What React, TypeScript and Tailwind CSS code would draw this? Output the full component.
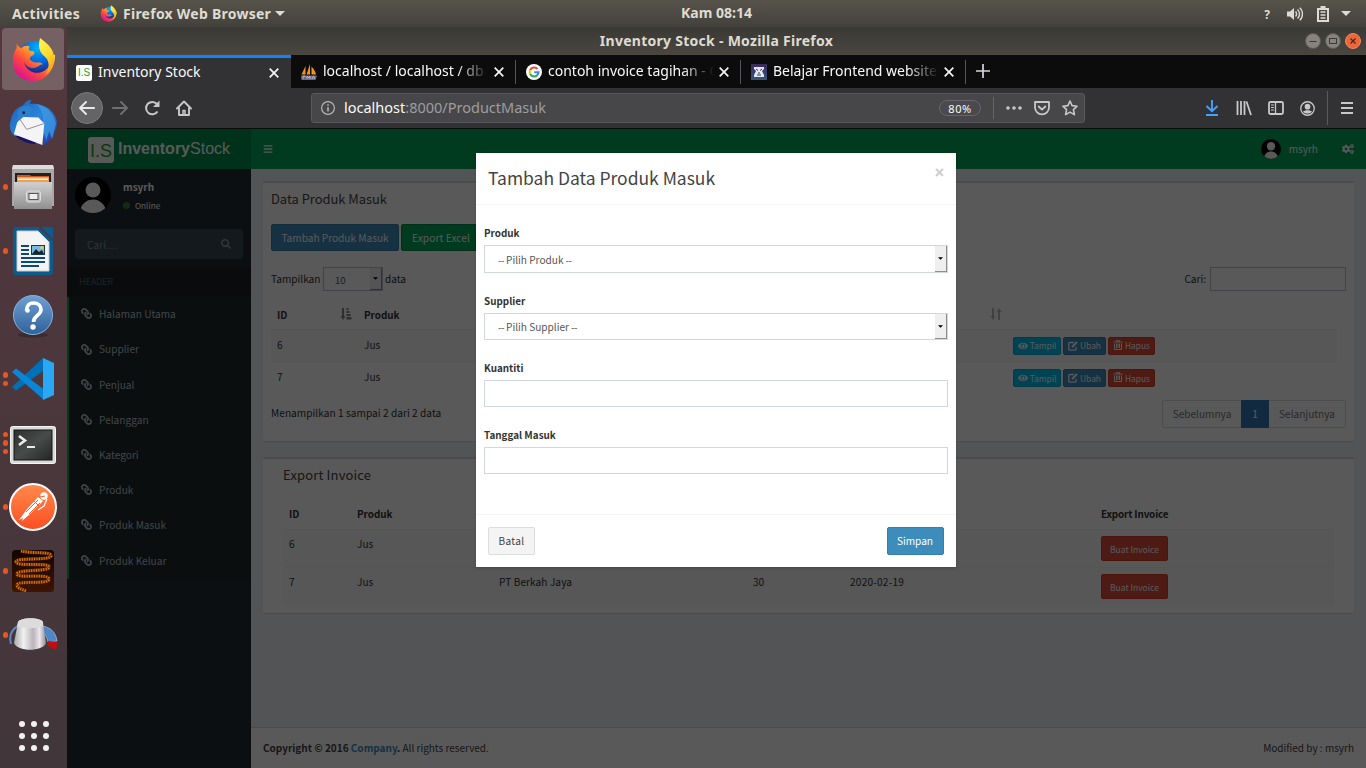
import React from "react";
import { FaBars, FaCogs, FaSearch, FaLink, FaEye } from "react-icons/fa";

const T = ({ c = "", children }: { c?: string; children: React.ReactNode }) => (
  <span className={"whitespace-nowrap " + c}>{children}</span>
);

const FirefoxLogo = ({ className, id }: { className: string; id: string }) => (
  <svg viewBox="0 0 48 48" className={className}>
    <defs>
      <linearGradient id={id + "a"} x1="0.9" y1="0.1" x2="0.2" y2="0.9">
        <stop offset="0" stopColor="#fff44f" />
        <stop offset="0.35" stopColor="#ffa32a" />
        <stop offset="0.65" stopColor="#ff4a3c" />
        <stop offset="1" stopColor="#e0138c" />
      </linearGradient>
      <radialGradient id={id + "b"} cx="0.6" cy="0.2" r="0.8">
        <stop offset="0" stopColor="#00b4f5" />
        <stop offset="0.6" stopColor="#0060df" />
        <stop offset="1" stopColor="#2a1e75" />
      </radialGradient>
      <linearGradient id={id + "c"} x1="0" y1="0" x2="0.4" y2="1">
        <stop offset="0" stopColor="#fff85a" />
        <stop offset="0.6" stopColor="#ffd92e" />
        <stop offset="1" stopColor="#ffa31a" />
      </linearGradient>
    </defs>
    <circle cx="25" cy="22" r="17.5" fill={`url(#${id}b)`} />
    <path d="M6 7c1 3 3 4 5 5 3-3 6-3 9-2-2 2-1 4 1 5 2 0 4 0 4 2 0 3-5 3-5 6 0 2 2 3 5 4 3 1 6-1 9 2-4 0-6 4-10 4-5 0-9-3-10-7 1 8 8 13 16 12 9-1 14-9 13-18l4-1c0 15-9 28-23 28C11 47 2 38 2 26 2 19 4 15 6 12z" fill={`url(#${id}a)`} />
    <path d="M31 1c6 5 14 10 15 20 1 9-4 16-9 19 4-6 4-12 1-17-3-4-11-7-7-22z" fill={`url(#${id}c)`} />
  </svg>
);

const Thunderbird = () => (
  <svg viewBox="0 0 50 50" className="size-[49px]">
    <defs>
      <linearGradient id="tb" x1="0" y1="0" x2="1" y2="1">
        <stop offset="0" stopColor="#1b5fb8" />
        <stop offset="0.5" stopColor="#2b86dc" />
        <stop offset="1" stopColor="#22289a" />
      </linearGradient>
    </defs>
    <path d="M2 21C4 12 9 8 14 7c3-5 6-6 9-6l-2 4c14-2 26 7 28 18 0 12-7 20-15 25l1-4-6 2C11 45-1 36 1 25z" fill="url(#tb)" />
    <path d="M28 5c9 2 18 9 20 20l-4 16-3-8-3 9-2-7-4 9 3-14-2-2c4-9 1-16-5-23z" fill="#3d9be4" opacity=".75" />
    <path d="M6 38c5 4 11 7 20 8l9-4-2-6z" fill="#1d1262" />
    <path d="M10 18L30 19l6 6-2 22L5 36z" fill="#f4f4f5" />
    <path d="M10 19l8 12 18-6" fill="none" stroke="#8c8f94" strokeWidth="1" />
    <path d="M9 12c5-7 12-6 15-2 0 5-7 6-10 9L8 24z" fill="#2f7fd0" />
    <circle cx="15" cy="14" r="1.500" fill="#1a2c4a" />
  </svg>
);

const Files = () => (
  <svg viewBox="0 0 44 46" className="h-[46px] w-[44px]">
    <defs>
      <linearGradient id="fi" x1="0" y1="0" x2="0" y2="1">
        <stop offset="0" stopColor="#d0d0d0" />
        <stop offset="1" stopColor="#909090" />
      </linearGradient>
    </defs>
    <path d="M2 1h40l1 4v37H1V5z" fill="#a8a8a8" />
    <path d="M2 1h40l1 4H1z" fill="#dcdcdc" />
    <rect x="4" y="9" width="36" height="14" fill="#23201f" />
    <path d="M6 11h13l1 1h18v8H6z" fill="#c9581f" />
    <path d="M6 13h32v6H6z" fill="#f0a04c" />
    <path d="M7 14.500h30v1.500H7z" fill="#fff1da" />
    <path d="M3 18h38v27H3z" fill="url(#fi)" />
    <rect x="15.500" y="27" width="14" height="11" rx="2" fill="#bcbcbc" stroke="#dedede" />
    <rect x="18" y="29.500" width="9" height="6" fill="#eee" stroke="#555" />
  </svg>
);

const Writer = () => (
  <svg viewBox="0 0 40 48" className="h-[48px] w-[40px]">
    <path d="M3 0h22l15 14v31a3 3 0 0 1-3 3H3a3 3 0 0 1-3-3V3a3 3 0 0 1 3-3z" fill="#0d5a8c" />
    <path d="M28 0h10a2 2 0 0 1 2 2v10z" fill="#0a5c93" />
    <path d="M4 4h21l11 11v29H4z" fill="#f3f3f3" stroke="#c9c9c9" />
    <path d="M8 19h8M8 23h8M8 27h8M8 31h24M8 35h24M8 39h18" stroke="#0e4a74" strokeWidth="2" />
    <rect x="18.500" y="18.500" width="13" height="9" fill="#7cb7e0" stroke="#0e3a5c" />
    <path d="M19 27l4-5 3 3 3-2 2 4z" fill="#222" />
    <circle cx="29" cy="20.500" r="1.500" fill="#f3cf3e" />
  </svg>
);

const Help = () => (
  <svg viewBox="0 0 42 44" className="mt-0.5 h-[44px] w-[42px]">
    <defs>
      <linearGradient id="he" x1="0" y1="0" x2="0" y2="1">
        <stop offset="0" stopColor="#6f9fd4" />
        <stop offset="1" stopColor="#2f6299" />
      </linearGradient>
    </defs>
    <ellipse cx="21" cy="41" rx="15" ry="2.500" fill="#2f2326" opacity=".6" />
    <circle cx="21" cy="21" r="19.500" fill="url(#he)" stroke="#86b3e0" />
    <path d="M14.500 16.500c0-5 3-7.500 7-7.500 4.500 0 7.500 2.500 7.500 6.500 0 6-7.500 6-7.500 12.500" fill="none" stroke="#fff" strokeWidth="3.600" />
    <circle cx="15.500" cy="16.500" r="2.300" fill="#fff" />
    <circle cx="21" cy="33" r="2.700" fill="#fff" />
  </svg>
);

const Vscode = () => (
  <svg viewBox="0 0 42 42" className="size-[42px]">
    <path d="M0 29l4 3.500L31 13V0z" fill="#0070b8" />
    <path d="M0 14l4-3.500 28 21V42L0 14z" fill="#0a86d8" />
    <path d="M31 0l11 5v32l-11 5z" fill="#2aa7f5" />
  </svg>
);

const TerminalIcon = () => (
  <svg viewBox="0 0 46 38" className="mt-[3px] h-[38px] w-[46px]">
    <defs>
      <linearGradient id="te" x1="0" y1="0" x2="1" y2="1">
        <stop offset="0" stopColor="#2c2f2e" />
        <stop offset="0.5" stopColor="#474b49" />
        <stop offset="1" stopColor="#232625" />
      </linearGradient>
    </defs>
    <rect x="0.500" y="0.500" width="45" height="37" rx="2" fill="#d9dbd9" stroke="#f4f4f4" />
    <rect x="4" y="4" width="38" height="30" fill="url(#te)" stroke="#151716" />
    <path d="M9 10l6 4.500L9 19" fill="none" stroke="#e8ebe8" strokeWidth="2.600" />
    <path d="M17 21h8" stroke="#e8ebe8" strokeWidth="2" />
  </svg>
);

const Postman = () => (
  <svg viewBox="0 0 48 48" className="size-[48px]">
    <defs>
      <linearGradient id="po" x1="0" y1="0" x2="0" y2="1">
        <stop offset="0" stopColor="#ff8a4c" />
        <stop offset="1" stopColor="#fb4e22" />
      </linearGradient>
    </defs>
    <circle cx="24" cy="24" r="23" fill="url(#po)" stroke="#fff" strokeWidth="2" />
    <circle cx="35" cy="13" r="3.700" fill="#fff" />
    <path d="M29 14l5 4-5 5-8 8-8 7 1-3-4 2 8-11z" fill="#fff" />
    <path d="M29 17L17 29M31 20L20 31M25 18l5 5" stroke="#f6602c" strokeWidth="1" fill="none" />
    <path d="M38 16l-3 7-6 4" stroke="#fff" strokeWidth="1.200" fill="none" />
    <path d="M31 14l5-1" stroke="#f6602c" strokeWidth="1" />
  </svg>
);

const coil = "M9 1c12 3 31 0 30 5S3 7 4 12s33 0 33 5S5 19 5 24s32-1 32 5S5 30 5 35c0 3 4 4 9 6";
const Spring = () => (
  <svg viewBox="0 0 42 42" className="size-[42px]">
    <defs>
      <linearGradient id="sp" x1="0" y1="0" x2="0" y2="1">
        <stop offset="0" stopColor="#120500" />
        <stop offset="1" stopColor="#401400" />
      </linearGradient>
    </defs>
    <rect width="42" height="42" rx="3.500" fill="url(#sp)" />
    <path d={coil} fill="none" stroke="#6a2a02" strokeWidth="3.400" />
    <path d={coil} fill="none" stroke="#d8780f" strokeWidth="2.800" strokeDasharray="1.100 1.300" />
  </svg>
);

const Knob = () => (
  <svg viewBox="0 0 50 34" className="-mt-[3px] h-[34px] w-[50px]">
    <defs>
      <linearGradient id="kn" x1="0" y1="0" x2="1" y2="0">
        <stop offset="0" stopColor="#a9a9a9" />
        <stop offset="0.3" stopColor="#f1f1f1" />
        <stop offset="0.6" stopColor="#b9b5ba" />
        <stop offset="0.8" stopColor="#eee6ee" />
        <stop offset="1" stopColor="#8a8a8a" />
      </linearGradient>
    </defs>
    <path d="M3 27C0 16 6 9 16 7" fill="none" stroke="#5c8ac4" strokeWidth="2" />
    <path d="M34 9c8 1 14 6 15 15l-9 1c-1-4-2-7-6-10z" fill="#4f86c6" stroke="#a8c4e4" strokeWidth=".7" />
    <path d="M40 24l10 1-2 8-8-4z" fill="#c40d0d" />
    <path d="M10 5c3-5 22-5 25 0l3 21c-3 9-29 9-32 0z" fill="url(#kn)" />
    <path d="M10 5c3-5 22-5 25 0v4c-8 3-18 3-26 0z" fill="#dcdcdc" />
  </svg>
);

const dock = [
  { n: 2, el: <FirefoxLogo className="size-[45px]" id="ffL" />, on: true },
  { n: 0, el: <Thunderbird /> },
  { n: 1, el: <Files /> },
  { n: 1, el: <Writer /> },
  { n: 0, el: <Help /> },
  { n: 2, el: <Vscode /> },
  { n: 3, el: <TerminalIcon /> },
  { n: 1, el: <Postman /> },
  { n: 1, el: <Spring /> },
  { n: 1, el: <Knob /> },
];

const Dock = () => (
  <aside className="flex w-[67px] shrink-0 flex-col bg-linear-to-b from-[#53383d] via-[#4b373c] to-[#41363a]">
    {dock.map((d, i) => (
      <div key={i} className="flex h-16 items-center">
        <div className="flex w-2 shrink-0 flex-col items-end gap-[3px]">
          {Array.from({ length: d.n }, (_, k) => (
            <span key={k} className="size-[5.500px] rounded-full bg-[#e95420]" />
          ))}
        </div>
        <div className={d.on ? "-ml-1.5 flex h-[62px] w-[62px] items-center justify-center rounded-[4px] bg-[#756064]" : "-ml-1.5 flex h-[62px] w-[62px] items-center justify-center"}>{d.el}</div>
      </div>
    ))}
    <div className="mt-auto mb-[17px] grid grid-cols-3 gap-[6px] self-center">
      {Array.from({ length: 9 }, (_, k) => (
        <span key={k} className="size-[6px] rounded-full bg-[#f2f0f0]" />
      ))}
    </div>
  </aside>
);

const Caret = ({ className }: { className: string }) => (
  <svg viewBox="0 0 10 5" className={className}><path d="M0 0h10L5 5z" fill="currentColor" /></svg>
);

const TopBar = () => (
  <header className="flex h-[27px] shrink-0 items-center bg-linear-to-b from-[#57544b] to-[#42413b] font-['Noto_Sans',sans-serif] text-[14px] font-bold text-[#dfdbd2]">
    <div className="flex w-[681px] items-center pl-3">
      <T c="tracking-[0.3px]">Activities</T>
      <FirefoxLogo className="ml-5 size-[17px]" id="ffS" />
      <span className="ml-1.5 flex"><T c="tracking-[0.25px]">Firefox Web Browser</T></span>
      <Caret className="ml-1 h-[5px] w-[10px]" />
    </div>
    <span className="flex pb-[2px]"><T>Kam 08:14</T></span>
    <div className="flex flex-1 items-center justify-end pr-[15px]">
      <span className="flex pt-0.5 text-[12px]"><T>?</T></span>
      <svg viewBox="0 0 16 14" className="ml-[17px] h-[14px] w-4" fill="none" stroke="currentColor" strokeWidth="1.400">
        <path d="M0 4.500h3L7 1v12L3 9.500H0z" fill="currentColor" stroke="none" />
        <path d="M8.500 4.500a3.500 3.500 0 0 1 0 5M10.500 2.500a6 6 0 0 1 0 9M12.800.8a8.500 8.500 0 0 1 0 12.400" />
      </svg>
      <svg viewBox="0 0 12 16" className="ml-[14px] h-4 w-3" fill="none" stroke="currentColor">
        <path d="M1 3h10v12H1z" strokeWidth="2" />
        <path d="M3.500 1h5" strokeWidth="2" />
        <path d="M3.500 6h5M3.500 9h5M3.500 12h5" strokeWidth="1.400" />
      </svg>
      <Caret className="ml-3 h-[5px] w-[10px]" />
    </div>
  </header>
);

const TitleBar = () => (
  <div className="flex h-7 shrink-0 items-center bg-linear-to-b from-[#3a3935] to-[#49473f] px-[5px] font-['Noto_Sans',sans-serif] text-[14px] font-bold text-[#dfdbd2]">
    <div className="flex-1" />
    <span className="flex pb-[2px]"><T c="tracking-[0.27px]">Inventory Stock - Mozilla Firefox</T></span>
    <div className="flex flex-1 justify-end gap-1">
      <svg viewBox="0 0 16 16" className="size-4"><circle cx="8" cy="8" r="7.500" fill="#85837b" stroke="#5c5a53" /><path d="M4.500 8.500h7" stroke="#3a3935" /></svg>
      <svg viewBox="0 0 16 16" className="size-4"><circle cx="8" cy="8" r="7.500" fill="#85837b" stroke="#5c5a53" /><rect x="4.500" y="5.500" width="7" height="5" fill="none" stroke="#3a3935" /></svg>
      <svg viewBox="0 0 16 16" className="size-4"><circle cx="8" cy="8" r="7.500" fill="#ee6538" stroke="#f08763" /><path d="M5.500 5.500l5 5M10.500 5.500l-5 5" stroke="#4a2a1c" strokeWidth="1.300" /></svg>
    </div>
  </div>
);

const Close = () => (
  <svg viewBox="0 0 10 10" className="size-[10px] shrink-0"><path d="M0.700 0.700l8.600 8.600M9.300 0.700l-8.600 8.600" stroke="#f5f5f7" strokeWidth="1.700" /></svg>
);

const PmaIcon = () => (
  <svg viewBox="0 0 16 16" className="size-4 shrink-0">
    <path d="M4.500 2v8.500H0.500zM9 0v10.500H5.500zM10.500 2.500c2 2 4 5 4.500 8h-4.500z" fill="#f3941d" />
    <path d="M0 11.500h16l-1.500 4.500H0.500z" fill="#6b6884" />
    <path d="M2 15v-3h2v1M6 15v-3l2 2 1-2v3M11 15l1.500-3 1.500 3" stroke="#c9c6dc" fill="none" strokeWidth=".8" />
  </svg>
);
const GoogleIcon = () => (
  <svg viewBox="0 0 16 16" className="size-4 shrink-0">
    <circle cx="8" cy="8" r="8" fill="#fff" />
    <g fill="none" strokeWidth="2.100">
      <path d="M11.500 4.900A4.500 4.500 0 0 0 4.200 5.900" stroke="#ea4335" />
      <path d="M4.200 5.900a4.500 4.500 0 0 0 0 4.200" stroke="#fbbc05" />
      <path d="M4.200 10.100a4.500 4.500 0 0 0 6.900 1.300" stroke="#34a853" />
      <path d="M11.100 11.400A4.500 4.500 0 0 0 12.500 8.200H8.200" stroke="#4285f4" />
    </g>
  </svg>
);
const HelmetIcon = () => (
  <svg viewBox="0 0 16 16" className="size-4 shrink-0">
    <defs><linearGradient id="hm" x1="0" y1="0" x2="0" y2="1"><stop offset="0" stopColor="#3a2a5c" /><stop offset="1" stopColor="#34557e" /></linearGradient></defs>
    <rect width="16" height="16" fill="url(#hm)" />
    <path d="M3 3h10v2l-2 2 2 4v2H3v-2l2-4-2-2z" fill="#e6e6ee" />
    <path d="M5 5l2 1.500M11 5L9 6.500M7 9h2M6 11h4" stroke="#38355f" strokeWidth="1" />
  </svg>
);

const fade = "[mask-image:linear-gradient(to_right,black_calc(100%-32px),transparent)]";

const Tabs = () => (
  <div className="flex h-[33px] shrink-0 bg-[#0c0c0d] font-['Noto_Sans',sans-serif] text-[14px] leading-[31px] text-[#f9f9fa]">
    <div className="flex w-[224px] items-center border-t-[3px] border-[#0a84ff] bg-[#323234] pr-3 pl-[9px] leading-[28px]">
      <span className="flex size-4 items-center justify-center rounded-[2px] bg-white font-['Liberation_Sans',sans-serif] text-[10px] leading-4 text-[#22a022]">I.S</span>
      <span className="ml-1.5 flex-1 pb-0.5"><T>Inventory Stock</T></span>
      <Close />
    </div>
    {[
      { icon: <PmaIcon />, t: "localhost / localhost / db", c: "pl-[10px]" },
      { icon: <GoogleIcon />, t: "contoh invoice tagihan - G", c: "pl-[10px]" },
      { icon: <HelmetIcon />, t: "Belajar Frontend website", c: "pl-[10px]" },
    ].map((x) => (
      <div key={x.t} className={"flex w-[225px] items-center pr-[11px] " + x.c}>
        {x.icon}
        <span className={"ml-1.5 h-[33px] min-w-0 flex-1 overflow-hidden " + fade}><T>{x.t}</T></span>
        <span className="ml-[5px] flex"><Close /></span>
        <span className="-mr-[11px] ml-[11px] h-6 w-px bg-[#55555a]" />
      </div>
    ))}
    <svg viewBox="0 0 14 14" className="mt-[9px] ml-[10px] size-[14px]"><path d="M7 0v14M0 7h14" stroke="#d7d7db" strokeWidth="1.700" /></svg>
  </div>
);

const NavBar = () => (
  <div className="flex h-[41px] shrink-0 items-center border-b border-[#0c0c0d] bg-[#323234] pr-[13px] pl-1 text-[#c8c8ca]">
    <span className="flex size-8 items-center justify-center rounded-full border border-[#7b7b7d] bg-[#646466]">
      <svg viewBox="0 0 16 16" className="size-4" fill="none" stroke="#e8e8ea" strokeWidth="1.900" strokeLinecap="round" strokeLinejoin="round"><path d="M15.200 8H1M7 2L1 8l6 6" /></svg>
    </span>
    <svg viewBox="0 0 16 16" className="ml-[9px] size-4" fill="none" stroke="#707073" strokeWidth="1.900" strokeLinecap="round" strokeLinejoin="round"><path d="M0.800 8H15M9 2l6 6-6 6" /></svg>
    <svg viewBox="0 0 16 16" className="ml-4 size-4" fill="none" stroke="currentColor" strokeWidth="2"><path d="M13.500 11.500A6.200 6.200 0 1 1 13 4" /><path d="M15.500 0.500V7H9z" fill="currentColor" stroke="none" /></svg>
    <svg viewBox="0 0 16 16" className="ml-4 size-4" fill="none" stroke="currentColor" strokeWidth="1.900" strokeLinejoin="round" strokeLinecap="round"><path d="M1 8.500L8 1.500l7 7M3 8v7h10V8" /><path d="M7 14.500v-4h2v4" strokeWidth="1.500" /></svg>
    <div className="ml-[119px] flex h-[30px] w-[774px] items-center rounded-[3px] border border-[#5a5a5e] bg-[#474749] pr-[6px] pl-[9px] font-['Noto_Sans',sans-serif] text-[14.500px]">
      <svg viewBox="0 0 14 14" className="size-[14px]" fill="none" stroke="#b4b4b6"><circle cx="7" cy="7" r="6.400" strokeWidth="1.200" /><path d="M7 6.200v4.300M7 3.200v1.600" strokeWidth="1.600" /></svg>
      <span className="ml-[9px] flex-1 text-[#9d9da0]"><T><span className="text-[#f9f9fa]">localhost</span>:8000/ProductMasuk</T></span>
      <span className="flex h-4 w-[42px] items-center justify-center rounded-full border border-[#66666a] bg-[#4a4a4e] text-[11px] leading-none text-[#f9f9fa]"><T c="tracking-[0.600px]">80%</T></span>
      <span className="ml-3 h-[22px] w-px bg-[#66666a]" />
      <svg viewBox="0 0 16 4" className="ml-3 h-1 w-4" fill="currentColor"><circle cx="2" cy="2" r="1.800" /><circle cx="8" cy="2" r="1.800" /><circle cx="14" cy="2" r="1.800" /></svg>
      <svg viewBox="0 0 16 16" className="ml-3 size-4" fill="none" stroke="currentColor" strokeWidth="1.800" strokeLinejoin="round" strokeLinecap="round"><path d="M1 2h14v5.500a7 6.800 0 0 1-14 0z" /><path d="M4.700 6.500L8 9.700l3.300-3.200" /></svg>
      <svg viewBox="0 0 16 16" className="ml-3 size-4" fill="none" stroke="currentColor" strokeWidth="1.600" strokeLinejoin="round"><path d="M8 1l2.100 4.600 5 .6-3.700 3.400 1 5L8 12.100l-4.400 2.500 1-5L.9 6.200l5-.6z" /></svg>
    </div>
    <div className="ml-auto flex items-center">
      <svg viewBox="0 0 14 16" className="h-4 w-[14px]" fill="none" stroke="#45a1ff" strokeWidth="1.900"><path d="M7 0v11M1.500 6L7 11.300 12.500 6M1 15h12" /></svg>
      <svg viewBox="0 0 16 16" className="ml-[17px] size-4" fill="none" stroke="currentColor" strokeWidth="1.800"><path d="M1.500 1v14M5 1v14M8.500 1v14M10.500 1.500L15 15" /></svg>
      <svg viewBox="0 0 16 16" className="ml-4 size-4" fill="none" stroke="currentColor" strokeWidth="1.800"><rect x="1" y="2" width="14" height="12" rx="1.500" /><path d="M7.500 2v12" strokeWidth="1.300" /><path d="M3 5h3M3 7.500h3M3 10h3" strokeWidth="1" /></svg>
      <svg viewBox="0 0 16 16" className="ml-4 size-[15px]" fill="none" stroke="currentColor"><circle cx="8" cy="8" r="7.200" strokeWidth="1.400" /><circle cx="8" cy="6" r="3" fill="currentColor" stroke="none" /><path d="M3.300 11.500C4.500 9.300 11.500 9.300 12.700 11.500 11 14 5 14 3.300 11.500z" fill="currentColor" stroke="none" /></svg>
      <span className="ml-3 h-[34px] w-px bg-[#5a5a5e]" />
      <svg viewBox="0 0 12 12" className="ml-[13px] size-3" stroke="currentColor" strokeWidth="1.900"><path d="M0 1h12M0 6h12M0 11h12" /></svg>
    </div>
  </div>
);

const Avatar = ({ className }: { className: string }) => (
  <svg viewBox="0 0 36 36" className={className}>
    <defs><clipPath id="av"><circle cx="18" cy="18" r="18" /></clipPath></defs>
    <g clipPath="url(#av)">
      <rect width="36" height="36" fill="#000" />
      <circle cx="18" cy="13" r="7.500" fill="#fff" />
      <path d="M4.500 36c1-9 7-13.500 13.500-13.500S30.500 27 31.500 36z" fill="#fff" />
    </g>
  </svg>
);

const menu = ["Halaman Utama", "Supplier", "Penjual", "Pelanggan", "Kategori", "Produk", "Produk Masuk", "Produk Keluar"];

const Sidebar = () => (
  <aside className="flex w-[184px] shrink-0 flex-col bg-[#222d32]">
    <div className="flex h-[40px] items-center bg-[#008d4c] pl-[21px]">
      <span className="mt-0.5 flex size-[26px] items-center justify-center rounded-[3px] bg-white pt-0.5 font-['Liberation_Sans',sans-serif] text-[18px] leading-none text-[#18a818]">I.S</span>
      <span className="ml-1 font-['Liberation_Sans',sans-serif] text-[16px] leading-6 text-white"><T><b>Inventory</b>Stock</T></span>
    </div>
    <div className="flex items-start gap-3 px-2 pt-2">
      <Avatar className="size-9" />
      <div className="flex flex-col pt-0.5 text-white">
        <span className="text-[10px] leading-4 font-bold"><T>msyrh</T></span>
        <span className="mt-[2px] flex items-center gap-[5px] text-[8.200px] leading-4"><span className="size-[7px] rounded-full bg-[#3c763d]" /><T>Online</T></span>
      </div>
    </div>
    <div className="mx-2 mt-4 flex h-[30px] items-center justify-between rounded-[3px] bg-[#374850] px-3 text-[10px] text-[#8a9499]">
      <T c="tracking-[0.15px]">Cari....</T>
      <FaSearch className="size-[10px] text-[#999]" />
    </div>
    <div className="mt-2 flex h-[30px] items-center bg-[#1a2226] px-3 pb-px text-[9.300px] text-[#4b646f]"><T c="tracking-[-0.3px]">HEADER</T></div>
    <nav className="flex flex-col border-l-2 border-[#00a65a] bg-[#1e282c]">
      {menu.map((m) => (
        <div key={m} className="flex h-[35.200px] items-center gap-[7px] pb-[1.500px] pl-3 text-[10.150px] text-[#b8c7ce]">
          <FaLink className="size-[11px] -scale-x-100" />
          <T>{m}</T>
        </div>
      ))}
    </nav>
  </aside>
);

const SortAsc = () => (
  <svg viewBox="0 0 12 12" className="h-3 w-3 text-[#888]" fill="currentColor"><path d="M2 0h2v8h1.500L3 12 .5 8H2zM6.500 0H8.500v2H6.500zM6.500 3H9.500v2H6.500zM6.500 6H10.500v2H6.500zM6.500 9H11.500v2.500H6.500z" /></svg>
);
const SortBoth = () => (
  <svg viewBox="0 0 12 12" className="h-3 w-3 text-[#bbb]" fill="currentColor"><path d="M2 0h2v8h1.500L3 12 .5 8H2zM8 12h2V4h1.500L9 0 6.500 4H8z" /></svg>
);
const Trash = () => (
  <svg viewBox="0 0 10 10" className="-mt-0.5 size-[10px]" fill="none" stroke="currentColor"><path d="M0.500 2h9M3.500 2V.600h3V2M1.500 3.500v6h7v-6M3.500 3.500v4.500M5 3.500v4.500M6.500 3.500v4.500" /></svg>
);
const Edit = () => (
  <svg viewBox="0 0 10 10" className="size-[10px]" fill="none" stroke="currentColor"><path d="M6 1.500H1.800a1 1 0 0 0-1 1v5.700a1 1 0 0 0 1 1h5.400a1 1 0 0 0 1-1V6" strokeWidth="1.300" /><path d="M4 6.300L9 1" strokeWidth="2" /></svg>
);

const xs = "flex h-[18px] items-center justify-center gap-[2px] rounded-[2px] border text-[8.400px] leading-none text-white ";

const Actions = () => (
  <div className="flex gap-0.5">
    <span className={xs + "w-12 border-[#00acd6] bg-[#00c0ef]"}><FaEye className="size-[10px]" /><T>Tampil</T></span>
    <span className={xs + "w-[43px] border-[#367fa9] bg-[#3c8dbc]"}><Edit /><T>Ubah</T></span>
    <span className={xs + "w-[47px] border-[#d73925] bg-[#dd4b39]"}><Trash /><T>Hapus</T></span>
  </div>
);

const SelectArrow = () => (
  <span className="flex w-[12px] items-center justify-center self-stretch border-r border-b border-[#8d8d8d] bg-[#efefef]">
    <Caret className="h-[3px] w-[5px] text-black" />
  </span>
);

const box = "rounded-[2px] border-t-2 border-[#d2d6de] bg-white shadow-[0_1px_1px_rgba(0,0,0,0.1)] ";

const Content = () => (
  <main className="flex min-w-0 flex-1 flex-col bg-[#ecf0f5] text-[10.100px] leading-4 text-[#333]">
    <div className="flex h-10 shrink-0 items-center bg-[#00a65a] px-3 text-white">
      <FaBars className="size-[10px]" />
      <Avatar className="ml-auto size-5" />
      <span className="ml-2 flex"><T>msyrh</T></span>
      <FaCogs className="ml-6 size-3" />
    </div>
    <div className="flex flex-1 flex-col gap-4 px-3 pt-3">
      <section className={box + "h-[260px] px-2"}>
        <div className="flex h-8 items-center text-[12.900px] text-[#444]"><T>Data Produk Masuk</T></div>
        <div className="mt-[9px] flex gap-0.5 text-white">
          <span className="flex h-[27px] w-[128px] items-center justify-center rounded-[2px] border border-[#367fa9] bg-[#3c8dbc]"><T>Tambah Produk Masuk</T></span>
          <span className="flex h-[27px] w-[80px] items-center rounded-[2px] border border-[#008d4c] bg-[#00a65a] pl-2.5"><T c="tracking-[0.1px]">Export Excel</T></span>
        </div>
        <div className="mt-4 flex h-6 items-center">
          <T>Tampilkan</T>
          <span className="mr-[2px] ml-[2.500px] flex h-6 w-[60px] items-center justify-between border border-[#bfc3ca] pl-[11px] text-[9.500px] text-[#555]"><span className="flex pt-px"><T>10</T></span><SelectArrow /></span>
          <T>data</T>
          <span className="ml-auto flex"><T>Cari:</T></span>
          <span className="ml-1 h-6 w-[136px] border border-[#bfc3ca]" />
        </div>
        <div className="grid w-[1066px] grid-cols-[87px_649px_1fr]">
          <div className="flex h-[38px] items-center justify-between px-1.5 pt-2.5 text-[9.900px] font-bold"><T>ID</T><span className="-mt-0.5"><SortAsc /></span></div>
          <div className="flex h-[38px] items-center justify-between pt-2.5 pr-[5px] pl-1.5 text-[9.900px] font-bold"><T>Produk</T><span className="-mt-0.5"><SortBoth /></span></div>
          <div />
          {["6", "7"].map((id, i) => {
            const row = i === 0 ? "flex h-[33px] items-center border-y border-[#f0f0f0] bg-[#f9f9f9] px-1.5 " : "flex h-8 items-center px-1.5 ";
            return (
              <React.Fragment key={id}>
                <div className={row + "pb-[2px]"}>{id}</div>
                <div className={row + "pb-[2px]"}><T>Jus</T></div>
                <div className={row}><Actions /></div>
              </React.Fragment>
            );
          })}
        </div>
        <div className="mt-1.5 flex h-7 items-center justify-between">
          <span className="flex pb-[2px]"><T c="tracking-[0.05px]">Menampilkan 1 sampai 2 dari 2 data</T></span>
          <div className="flex h-7 rounded-[2px] border border-[#ddd] leading-[26px] text-[#777]">
            <span className="w-[78px] text-center"><T>Sebelumnya</T></span>
            <span className="-my-px w-7 bg-[#337ab7] text-center leading-7 text-white">1</span>
            <span className="w-[76px] text-center"><T>Selanjutnya</T></span>
          </div>
        </div>
      </section>
      <section className={box + "h-[156px] px-5"}>
        <div className="flex h-8 items-center text-[13px] text-[#444]"><T c="tracking-[0.16px]">Export Invoice</T></div>
        <div className="grid grid-cols-[68px_142px_254px_97px_251px_1fr]">
          {["ID", "Produk", "", "", "", "Export Invoice"].map((h, i) => (
            <div key={i} className="flex h-[38px] items-center px-1.5 pt-2 text-[9.900px] font-bold"><T c={i === 5 ? "tracking-[-0.15px]" : ""}>{h}</T></div>
          ))}
          {[["6", "Jus", "", "", ""], ["7", "Jus", "PT Berkah Jaya", "30", "2020-02-19"]].map((r) => (
            <React.Fragment key={r[0]}>
              {r.map((c, i) => (
                <div key={i} className="h-[38px] border-t border-[#f2f2f2] bg-[#f9f9f9] px-1.5 pt-1.5"><T c={i === 4 ? "tracking-[0.22px]" : i === 2 ? "tracking-[0.08px]" : ""}>{c}</T></div>
              ))}
              <div className="h-[38px] border-t border-[#f2f2f2] bg-[#f9f9f9] px-1.5 pt-1.5">
                <span className="flex h-[25px] w-[67px] items-center justify-center rounded-[2px] border border-[#d73925] bg-[#dd4b39] text-[8.500px] text-white"><T>Buat Invoice</T></span>
              </div>
            </React.Fragment>
          ))}
        </div>
      </section>
    </div>
    <footer className="flex h-[41px] items-center justify-between border-t border-[#d2d6de] bg-white px-3 text-[10px] text-[#444]">
      <T><b>Copyright © 2016 <span className="text-[#3c8dbc]">Company</span>.</b> All rights reserved.</T>
      <T>Modified by : msyrh</T>
    </footer>
  </main>
);

const Field = ({ label, h, children }: { label: string; h: string; children?: React.ReactNode }) => (
  <div className="mt-5">
    <div className="text-[9.900px] font-bold text-[#333]"><T>{label}</T></div>
    <div className={"mt-1 flex items-center justify-between border border-[#d2d6de] pl-[13px] text-[#555] " + h}>{children}</div>
  </div>
);

const Choice = ({ children }: { children: string }) => (
  <>
    <span className="flex gap-[2px] pt-px">
      <T c="tracking-[-0.500px]">--</T>
      <T>{children}</T>
      <T c="tracking-[-0.500px]">--</T>
    </span>
    <SelectArrow />
  </>
);

const Modal = () => (
  <div className="absolute top-[24px] left-[409px] flex h-[414px] w-[480px] flex-col bg-white text-[10.100px] leading-4 shadow-[0_2px_3px_rgba(0,0,0,0.125)]">
    <div className="flex h-[52px] items-start justify-between border-b border-[#f4f4f4] px-3 pt-3">
      <span className="text-[17.480px] leading-[25px] text-[#444]"><T>Tambah Data Produk Masuk</T></span>
      <span className="font-['Liberation_Sans',sans-serif] text-[16px] leading-[15px] font-bold text-[#ccc]">×</span>
    </div>
    <div className="flex-1 px-2">
      <Field label="Produk" h="h-7"><Choice>Pilih Produk</Choice></Field>
      <Field label="Supplier" h="h-[27px]"><Choice>Pilih Supplier</Choice></Field>
      <Field label="Kuantiti" h="h-[27px]" />
      <Field label="Tanggal Masuk" h="h-[27px]" />
    </div>
    <div className="flex h-[53px] items-start justify-between border-t border-[#f4f4f4] px-3 pt-3">
      <span className="flex h-7 w-[47px] items-center justify-center rounded-[2px] border border-[#ddd] bg-[#f4f4f4] text-[#444]"><T c="tracking-[0.3px]">Batal</T></span>
      <span className="flex h-7 w-[57px] items-center justify-center rounded-[2px] border border-[#367fa9] bg-[#3c8dbc] pr-px text-white"><T>Simpan</T></span>
    </div>
  </div>
);

export default function App() {
  return (
    <div className="flex h-[768px] w-[1366px] flex-col overflow-hidden font-['Noto_Sans_CJK_SC',sans-serif]">
      <TopBar />
      <div className="flex min-h-0 flex-1">
        <Dock />
        <div className="flex min-w-0 flex-1 flex-col">
          <TitleBar />
          <Tabs />
          <NavBar />
          <div className="relative flex min-h-0 flex-1">
            <Sidebar />
            <Content />
            <div className="absolute inset-0 bg-black/65" />
            <Modal />
          </div>
        </div>
      </div>
    </div>
  );
}
